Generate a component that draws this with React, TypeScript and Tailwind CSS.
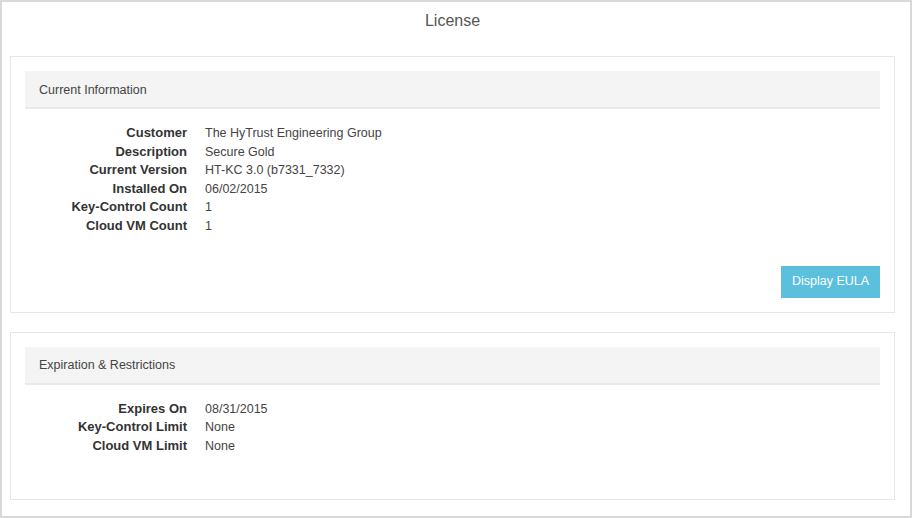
const font = { fontFamily: '"Liberation Sans", Arial, sans-serif' };

type Row = { label: string; value: string };

const current: Row[] = [
  { label: "Customer", value: "The HyTrust Engineering Group" },
  { label: "Description", value: "Secure Gold" },
  { label: "Current Version", value: "HT-KC 3.0 (b7331_7332)" },
  { label: "Installed On", value: "06/02/2015" },
  { label: "Key-Control Count", value: "1" },
  { label: "Cloud VM Count", value: "1" },
];

const limits: Row[] = [
  { label: "Expires On", value: "08/31/2015" },
  { label: "Key-Control Limit", value: "None" },
  { label: "Cloud VM Limit", value: "None" },
];

function Details({ rows }: { rows: Row[] }) {
  return (
    <div className="mt-[15px] grid grid-cols-[162px_1fr] gap-x-[18px] leading-[18.6px]">
      {rows.map((r) => (
        <div key={r.label} className="contents">
          <div className="text-right text-[13px] font-bold text-[#333]">{r.label}</div>
          <div className="text-[12.5px] text-[#444]">{r.value}</div>
        </div>
      ))}
    </div>
  );
}

function Panel({ title, children, className }: { title: string; children: React.ReactNode; className?: string }) {
  return (
    <div className={`ml-[8px] mr-[15px] border border-[#e6e6e6] px-[14px] pt-[14px] ${className ?? ""}`}>
      <div className="flex h-[38px] items-center border-b-2 border-[#e9e9e9] bg-[#f4f4f4] px-[14px] pt-[2px] text-[12.5px] text-[#444]">
        {title}
      </div>
      {children}
    </div>
  );
}

export default function App() {
  return (
    <div style={font} className="h-[518px] w-[912px] border-2 border-[#d9d9d9] bg-white">
      <div className="ml-[8px] mr-[15px] h-[54px] pt-[9px] text-center text-[16px] leading-[20px] text-[#555]">License</div>

      <Panel title="Current Information" className="pb-[14px]">
        <Details rows={current} />
        <div className="mt-[30px] flex justify-end">
          <button className="h-[32px] w-[99px] bg-[#5bc0de] text-[12.5px] text-white">Display EULA</button>
        </div>
      </Panel>

      <Panel title="Expiration & Restrictions" className="mt-[19px] pb-[44px]">
        <Details rows={limits} />
      </Panel>
    </div>
  );
}
